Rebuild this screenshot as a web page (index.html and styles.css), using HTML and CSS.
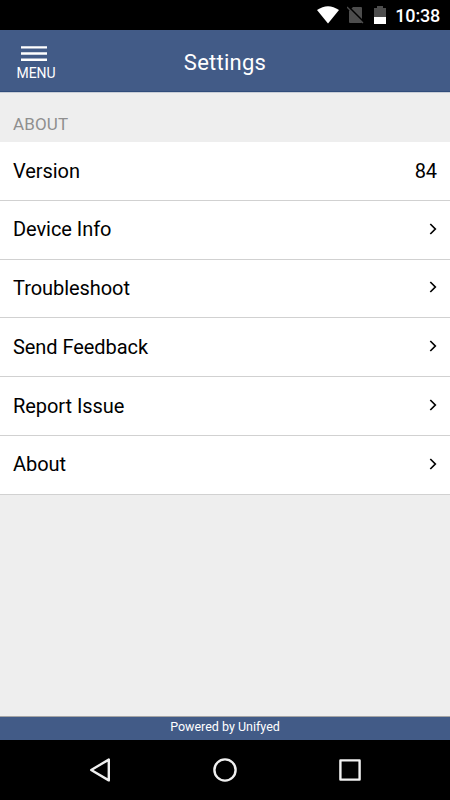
FILE: index.html
```html
<!DOCTYPE html>
<html lang="en">
<head>
<meta charset="utf-8">
<title>Settings</title>
<link rel="stylesheet" href="styles.css">
</head>
<body>
<div class="status">
  <svg class="wifi" width="22" height="18" viewBox="0 0 22 18"><path d="M0 4Q11-3.6 22 4L11 17.5Z" fill="#fff"/></svg>
  <svg class="sim" width="17" height="18" viewBox="0 0 17 18"><path d="M6 1h8q1 0 1 1v14q0 1-1 1H3q-1 0-1-1V5z" fill="#4d4d4d"/><path d="M1 .3l15.5 15.5" stroke="#000" stroke-width="1.8"/><path d="M0 1l16 16" stroke="#4d4d4d" stroke-width="1.3"/></svg>
  <svg class="battery" width="12" height="18" viewBox="0 0 12 18"><path d="M0 2h3V0h6v2h3v16H0z" fill="#4d4d4d"/><path d="M0 11h12v7H0z" fill="#fff"/></svg>
  <span class="clock">10:38</span>
</div>
<header class="header">
  <div class="menu"><svg width="26" height="16" viewBox="0 0 26 16"><path d="M0 1.4h26M0 7.5h26M0 13.8h26"/></svg><span>MENU</span></div>
  <h1>Settings</h1>
</header>
<main>
  <h2>ABOUT</h2>
  <ul class="list">
    <li><span>Version</span><span>84</span></li>
    <li><span>Device Info</span><svg width="8" height="12" viewBox="0 0 8 12"><path d="M1.3 1l5 5-5 5"/></svg></li>
    <li><span>Troubleshoot</span><svg width="8" height="12" viewBox="0 0 8 12"><path d="M1.3 1l5 5-5 5"/></svg></li>
    <li><span>Send Feedback</span><svg width="8" height="12" viewBox="0 0 8 12"><path d="M1.3 1l5 5-5 5"/></svg></li>
    <li><span>Report Issue</span><svg width="8" height="12" viewBox="0 0 8 12"><path d="M1.3 1l5 5-5 5"/></svg></li>
    <li><span>About</span><svg width="8" height="12" viewBox="0 0 8 12"><path d="M1.3 1l5 5-5 5"/></svg></li>
  </ul>
</main>
<footer class="powered">Powered by Unifyed</footer>
<nav class="nav">
  <svg width="24" height="26" viewBox="0 0 24 26"><path d="M20.8 2.6v20.8L3.2 13z"/></svg>
  <svg width="24" height="26" viewBox="0 0 24 26"><circle cx="12" cy="13" r="10.6"/></svg>
  <svg width="24" height="26" viewBox="0 0 24 26"><path d="M2.4 3.4h19.2v19.2H2.4z"/></svg>
</nav>
</body>
</html>
```
FILE: styles.css
```css
* { box-sizing: border-box; }
body { margin: 0; height: 800px; display: flex; flex-direction: column; font-family: Roboto, sans-serif; background: #eee; overflow: hidden; }
.status { height: 30px; background: #000; color: #fff; display: flex; align-items: center; justify-content: flex-end; padding-right: 10px; }
.sim { margin-left: 8px; }
.battery { margin-left: 10px; }
.clock { width: 45px; margin-left: 9px; padding-top: 1px; font-size: 18px; font-weight: 500; letter-spacing: -.2px; text-align: right; }
.header { height: 62px; background: #425b87; border-bottom: 1px solid #304c7a; color: #fff; display: grid; grid-template-columns: 72px 1fr 72px; align-items: center; }
.menu { display: flex; flex-direction: column; align-items: center; gap: 3px; padding-top: 5px; font-size: 14px; line-height: 16px; }
.menu svg { display: block; margin-right: 4px; }
.menu path { stroke: #fff; stroke-width: 2.4; }
.menu span { letter-spacing: -.1px; }
.header h1 { margin: 0; padding-top: 3px; text-align: center; font-size: 22px; font-weight: 400; letter-spacing: .25px; }
main { flex: 1; }
h2 { margin: 0; height: 50px; border-top: 1px solid #c9ced7; padding: 21px 13px 0; font-size: 17px; line-height: 20px; font-weight: 400; letter-spacing: .15px; color: #8f8f8f; }
.list { list-style: none; margin: 0; padding: 0; }
.list li { height: 58.75px; padding: 0 13px; background: #fff; border-bottom: 1px solid #d1d1d1; display: flex; align-items: center; justify-content: space-between; font-size: 20px; letter-spacing: -.06px; color: #000; }
.list span { margin-bottom: .4px; }
.list svg { margin-bottom: 2px; }
.list path { fill: none; stroke: #000; stroke-width: 1.7; }
.powered { height: 24px; border-top: 1px solid #a5a5a5; background: #425b87; color: #fff; text-align: center; font-size: 12.5px; line-height: 20px; }
.nav { height: 60px; background: #000; display: flex; justify-content: space-between; align-items: center; padding: 0 88px; }
.nav path, .nav circle { fill: none; stroke: #f0f0f0; stroke-width: 2.4; stroke-linejoin: round; }
```
